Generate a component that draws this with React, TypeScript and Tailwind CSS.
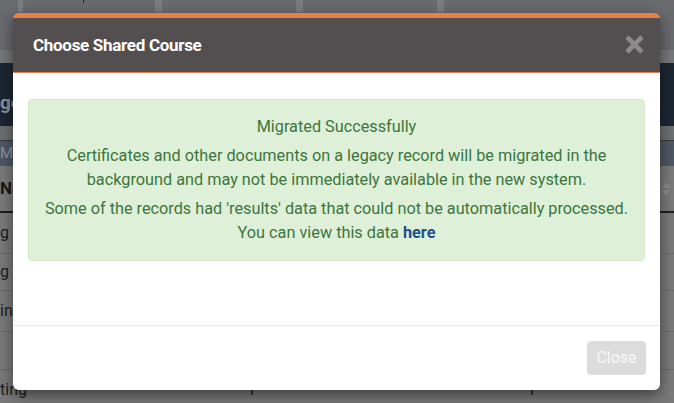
import React from "react";

const font = { fontFamily: "Roboto, 'Noto Sans', 'Liberation Sans', sans-serif" };

function Row({ h, label, last }: { h: string; label: string; last?: boolean }) {
  return (
    <div className={`${h} flex items-center border-b border-[#6a6a6a] bg-[#7a7a7a] text-[16px] text-[#1e1e1e]`}>
      <div className="w-[95px]">{label}</div>
      {last ? (
        <div className="flex flex-1">
          <div className="w-[161px] text-right">1</div>
          <div className="w-[280px] text-right">1</div>
        </div>
      ) : null}
    </div>
  );
}

export default function App() {
  return (
    <div className="relative w-[674px] h-[403px] overflow-hidden bg-[#6a6b6f]" style={font}>
      {/* Background page (dimmed) */}
      <div className="flex flex-col">
        <div className="h-[50px] flex bg-[#6a6b6f]">
          <div className="w-[18px]" />
          <div className="w-[5px] h-[12px] bg-[#7c7d80]" />
          <div className="w-[60px]" />
          <div className="w-px h-[3px] bg-[#222]" />
          <div className="w-[71px]" />
          <div className="w-[7px] h-[12px] bg-[#7c7d80]" />
          <div className="w-[134px]" />
          <div className="w-[7px] h-[12px] bg-[#7c7d80]" />
          <div className="w-[134px]" />
          <div className="w-[7px] h-[12px] bg-[#7c7d80]" />
        </div>
        <div className="h-[13px] bg-[#77787b]" />
        <div className="h-[63px] bg-[#1c2733] flex items-end pb-[14px]">
          <span className="text-[19px] font-bold text-[#8b949e] leading-none">ge</span>
        </div>
        <div className="h-[15px] bg-[#6f7073] border-b border-[#3a3b3d]" />
        <div className="h-[25px] bg-[#4f5864] flex items-center text-[15px] text-[#8d96a0]">Mi</div>
        <div className="h-[47px] bg-[#7b7b7b] border-b-2 border-[#1e1e1e] flex items-center justify-between pr-[4px]">
          <span className="text-[17px] font-bold text-[#1a1a1a]">Na</span>
          <svg width="8" height="14" viewBox="0 0 8 14">
            <path d="M4 0 L8 6 L0 6 Z M0 8 L8 8 L4 14 Z" fill="#8e8e8e" />
          </svg>
        </div>
        <Row h="h-[41px]" label="g" />
        <Row h="h-[37px]" label="g" />
        <Row h="h-[41px]" label="ini" />
        <Row h="h-[38px]" label="" />
        <Row h="h-[40px]" label="ting" last />
      </div>

      {/* Modal */}
      <div className="absolute left-[13px] top-[13px] w-[647px] rounded-[6px] bg-white overflow-hidden shadow-[0_5px_15px_rgba(0,0,0,0.5)]">
        <div className="h-[60px] border-t-[5px] border-b border-[#e8804a] bg-[#534e4f] flex items-center justify-between pl-[20px] pr-[16px]">
          <span className="text-[17px] font-bold text-white tracking-[-0.3px] mt-[1px]">Choose Shared Course</span>
          <svg width="19" height="19" viewBox="0 0 19 19" className="mb-[2px]">
            <path d="M2 2 L17 17 M17 2 L2 17" stroke="#8c8a8a" strokeWidth="4.6" strokeLinecap="butt" />
          </svg>
        </div>
        <div className="h-[252px] px-[15px] pt-[26px]">
          <div className="rounded-[4px] border border-[#d6e9c6] bg-[#dff0d8] text-[#3c763d] text-center py-[15px] text-[16.25px] leading-[24px]">
            <p className="mb-[5px]">Migrated Successfully</p>
            <p className="mb-[5px] px-[30px]">
              Certificates and other documents on a legacy record will be migrated in the background and may not be immediately available in the new system.
            </p>
            <p>
              Some of the records had 'results' data that could not be automatically processed.
              <br />
              You can view this data <span className="font-bold text-[#1f4e8c]">here</span>
            </p>
          </div>
        </div>
        <div className="h-[65px] border-t border-[#e5e5e5] flex justify-end items-start pt-[15px] pr-[14px]">
          <button className="w-[59px] h-[34px] bg-[#dcdcdc] text-[#f7f7f7] rounded-[4px] text-[16px]">Close</button>
        </div>
      </div>
    </div>
  );
}
